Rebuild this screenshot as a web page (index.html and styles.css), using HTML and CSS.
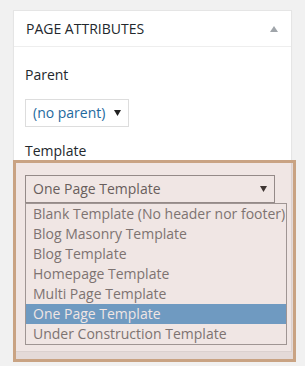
FILE: index.html
```html
<!DOCTYPE html>
<html lang="en">
<head>
<meta charset="utf-8">
<title>Page Attributes</title>
<link rel="stylesheet" href="styles.css">
</head>
<body>

    <div class="postbox">
        <div class="postbox-header">
            <h2>Page Attributes</h2>
            <svg class="toggle" width="8" height="6" viewBox="0 0 8 6"><path d="M4 0 L8 6 L0 6 Z"/></svg>
        </div>

        <div class="inside">
            <p class="label">Parent</p>
            <div class="select select-parent">
                <span>(no parent)</span>
                <svg class="arrow" width="7" height="6" viewBox="0 0 7 6"><path d="M0 0 L7 0 L3.5 6 Z"/></svg>
            </div>

            <p class="label">Template</p>
            <div class="select select-template">
                <span>One Page Template</span>
                <svg class="arrow" width="7" height="6" viewBox="0 0 7 6"><path d="M0 0 L7 0 L3.5 6 Z"/></svg>
            </div>
            <ul class="options">
                <li>Blank Template (No header nor footer)</li>
                <li>Blog Masonry Template</li>
                <li>Blog Template</li>
                <li>Homepage Template</li>
                <li>Multi Page Template</li>
                <li class="selected">One Page Template</li>
                <li>Under Construction Template</li>
            </ul>
        </div>
    </div>

    <div class="highlight"></div>

</body>
</html>
```

FILE: styles.css
```css
body {
    background-color: #f1f1f1;
    color: #23282d;
    font-family: "Open Sans", sans-serif;
    font-size: 14px;
    line-height: 20px;
    margin: 0;
    padding: 10px 0 0 13px;
}

.postbox {
    width: 277px;
    background-color: white;
    border: 1px solid #e5e5e5;
    box-shadow: 0 1px 1px rgba(0, 0, 0, 0.04);
}

.postbox-header {
    display: flex;
    align-items: center;
    justify-content: space-between;
    padding: 8px 13px 7px 12px;
    border-bottom: 1px solid #eeeeee;
}

.postbox-header h2 {
    margin: 0;
    font-size: 14px;
    font-weight: normal;
    line-height: 20px;
    text-transform: uppercase;
}

.toggle {
    fill: #a0a5aa;
}

.inside {
    padding: 18px 12px 6px 11px;
}

.label {
    margin: 0 0 14px 0;
}

.select {
    display: flex;
    align-items: center;
    justify-content: space-between;
    box-sizing: border-box;
    height: 28px;
    padding: 0 7px;
    border: 1px solid #dddddd;
}

.select-parent {
    width: 104px;
    color: #1e6a9e;
    margin-bottom: 14px;
}

.select-template {
    width: 250px;
    color: #555555;
    border-color: #8c8c8c;
}

.select .arrow {
    fill: #222222;
}

.options {
    list-style: none;
    margin: 0;
    padding: 0;
    width: 262px;
    box-sizing: border-box;
    border: 1px solid #9a9a9a;
    color: #707070;
}

.options li {
    height: 20px;
    line-height: 20px;
    padding-left: 7px;
    white-space: nowrap;
}

.options li.selected {
    background-color: #5ea0d4;
    color: white;
}

.highlight {
    position: absolute;
    left: 13px;
    top: 160px;
    width: 277px;
    height: 196px;
    border: 3px solid #c9a383;
    background-color: rgba(180, 130, 120, 0.2);
}
```
